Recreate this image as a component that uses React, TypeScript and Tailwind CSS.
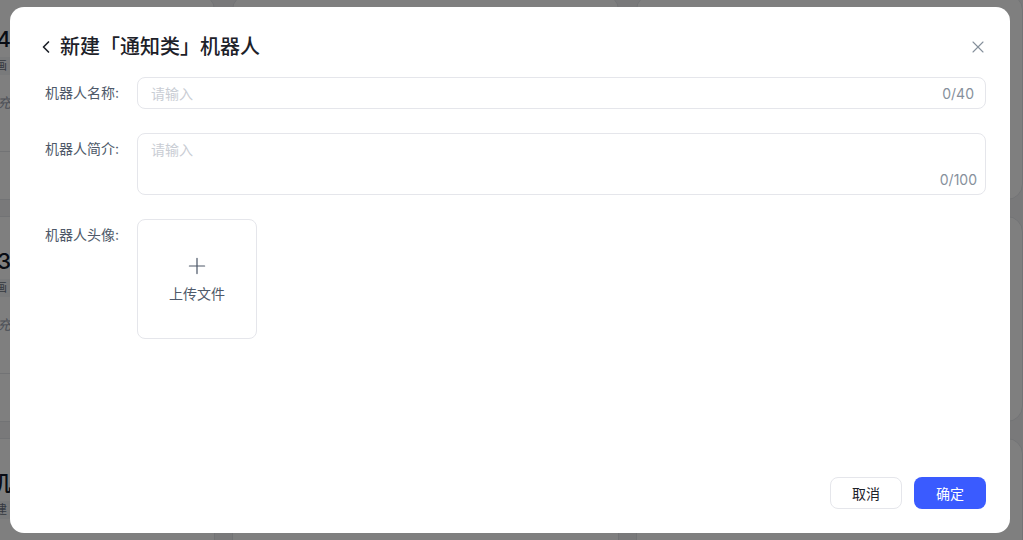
import { ChevronLeft, X, Plus } from "lucide-react";

const font = { fontFamily: '"Inter", "Noto Sans CJK SC", sans-serif' };

function EdgeCard({ title, last }: { title: string; last?: boolean }) {
  return (
    <div className="bg-white rounded-2xl border border-gray-200 h-[206px] pt-[30px]">
      <div className="w-[182px] flex flex-col items-end">
        <span className="text-[22px] leading-[28px] font-medium text-gray-900">{title}</span>
        <span className="mt-[4px] text-[12px] leading-[18px] text-gray-500 bg-gray-100 px-1">{last ? "创建" : "对话画"}</span>
        {!last && <span className="mt-[18px] text-[14px] leading-[20px] text-gray-400 italic">补充</span>}
      </div>
      {!last && <div className="border-t border-gray-200 mt-[38px]" />}
    </div>
  );
}

function BlankCard() {
  return <div className="bg-white rounded-2xl border border-gray-200 h-[206px]" />;
}

export default function App() {
  return (
    <div className="relative w-[1023px] h-[540px] overflow-hidden bg-[#f2f3f5]" style={font}>
      {/* background page */}
      <div className="grid grid-cols-[387px_387px_387px] gap-x-[17px] gap-y-[16px] -ml-[172px] -mt-[6px]">
        <EdgeCard title="机器人_4" />
        <BlankCard />
        <BlankCard />
        <EdgeCard title="机器人_3" />
        <BlankCard />
        <BlankCard />
        <EdgeCard title="通知机" last />
        <BlankCard />
        <BlankCard />
      </div>

      {/* overlay */}
      <div className="absolute inset-0 bg-black/50 flex items-start justify-start pl-[10px] pt-[7px]">
        {/* modal */}
        <div className="w-[1000px] h-[526px] bg-white rounded-[14px] flex flex-col">
          <div className="flex items-center h-[80px] pl-[26px] pr-[22px] pb-[1px]">
            <ChevronLeft className="w-[20px] h-[20px] text-[#1d2129]" strokeWidth={2} />
            <span className="ml-[4px] text-[20px] leading-[28px] font-medium text-[#1d2129]">
              新建「通知类」机器人
            </span>
            <X className="ml-auto w-[20px] h-[20px] text-[#86909c]" strokeWidth={1.3} />
          </div>

          <div className="flex flex-col gap-[24px] -mt-[10px]">
            <div className="flex">
              <div className="w-[127px] pl-[35px] pt-[5px] text-[14px] leading-[22px] text-[#4e5969]">机器人名称:</div>
              <div className="w-[849px] h-[32px] rounded-[8px] border border-[#e5e6eb] flex items-center pl-[13px] pr-[11px] text-[14px]">
                <span className="text-[#c9cdd4]">请输入</span>
                <span className="ml-auto text-[#86909c]">0/40</span>
              </div>
            </div>

            <div className="flex">
              <div className="w-[127px] pl-[35px] pt-[5px] text-[14px] leading-[22px] text-[#4e5969]">机器人简介:</div>
              <div className="w-[849px] h-[62px] rounded-[8px] border border-[#e5e6eb] flex flex-col pl-[13px] pr-[8px] pt-[5px] text-[14px] leading-[22px]">
                <span className="text-[#c9cdd4]">请输入</span>
                <span className="ml-auto mt-auto mb-[3px] text-[#86909c]">0/100</span>
              </div>
            </div>

            <div className="flex">
              <div className="w-[127px] pl-[35px] pt-[5px] text-[14px] leading-[22px] text-[#4e5969]">机器人头像:</div>
              <div className="w-[120px] h-[120px] rounded-[8px] border border-[#e5e6eb] flex flex-col items-center justify-center">
                <Plus className="w-[26px] h-[26px] text-[#4e5969]" strokeWidth={1.15} />
                <span className="mt-[4px] text-[14px] leading-[22px] text-[#4e5969]">上传文件</span>
              </div>
            </div>
          </div>

          <div className="mt-auto flex justify-end gap-[12px] pr-[24px] pb-[24px]">
            <button className="w-[72px] h-[32px] rounded-[8px] border border-[#e5e6eb] bg-white text-[14px] text-[#1d2129]">
              取消
            </button>
            <button className="w-[72px] h-[32px] rounded-[8px] bg-[#3a5bff] text-[14px] text-white">
              确定
            </button>
          </div>
        </div>
      </div>
    </div>
  );
}
